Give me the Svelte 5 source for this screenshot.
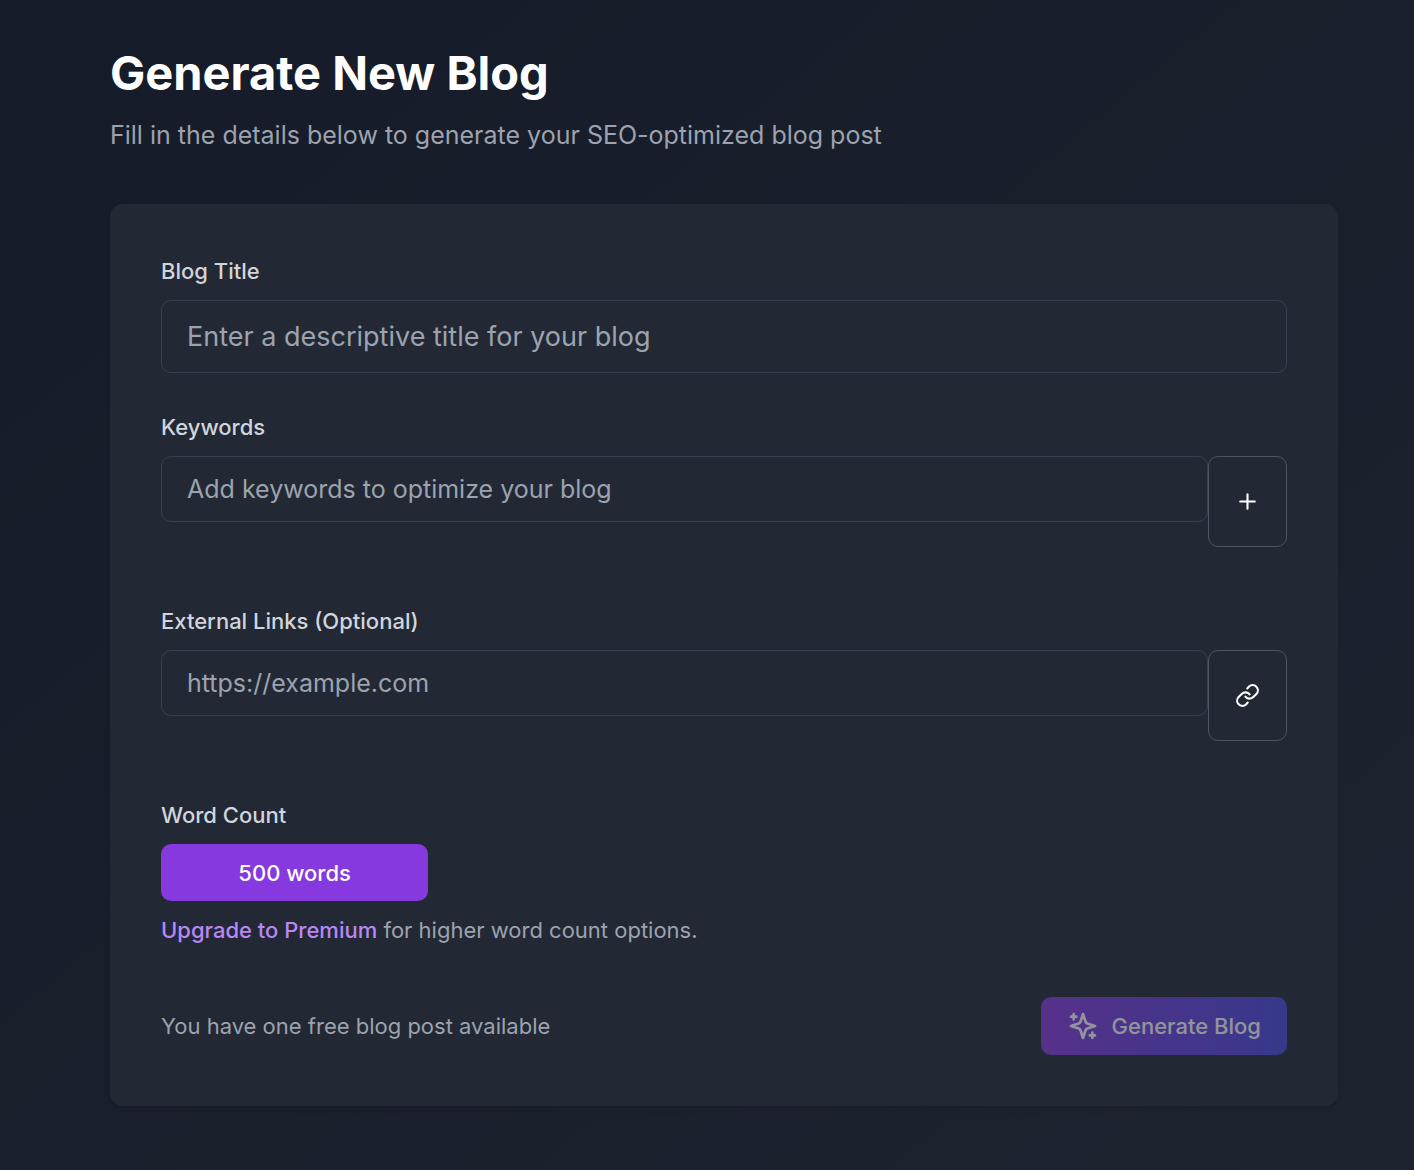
<script>
  let title = $state('')
  let keyword = $state('')
  let keywords = $state([])
  let link = $state('')
  let links = $state([])
  let wordCount = $state(500)

  const wordCountOptions = [500]

  let canGenerate = $derived(title.trim() !== '' && keywords.length > 0)

  function addKeyword() {
    const value = keyword.trim()
    if (!value || keywords.includes(value)) return
    keywords.push(value)
    keyword = ''
  }

  function addLink() {
    const value = link.trim()
    if (!value || links.includes(value)) return
    links.push(value)
    link = ''
  }
</script>

<main>
  <div class="container">
    <header>
      <h1>Generate New Blog</h1>
      <p>Fill in the details below to generate your SEO-optimized blog post</p>
    </header>

    <form class="card" onsubmit={(e) => e.preventDefault()}>
      <div class="field">
        <label for="title">Blog Title</label>
        <input id="title" class="title-input" bind:value={title} placeholder="Enter a descriptive title for your blog" />
      </div>

      <div class="field list-field">
        <label for="keyword">Keywords</label>
        <div class="row">
          <input id="keyword" bind:value={keyword} placeholder="Add keywords to optimize your blog" />
          <button type="button" class="add" aria-label="Add keyword" onclick={addKeyword}>
            <svg viewBox="0 0 24 24"><path d="M5 12h14M12 5v14" /></svg>
          </button>
        </div>
        {#if keywords.length}
          <ul>
            {#each keywords as item}
              <li>{item}</li>
            {/each}
          </ul>
        {/if}
      </div>

      <div class="field list-field">
        <label for="link">External Links (Optional)</label>
        <div class="row">
          <input id="link" type="url" bind:value={link} placeholder="https://example.com" />
          <button type="button" class="add" aria-label="Add link" onclick={addLink}>
            <svg viewBox="0 0 24 24">
              <path d="M10 13a5 5 0 0 0 7.54.54l3-3a5 5 0 0 0-7.07-7.07l-1.72 1.71" />
              <path d="M14 11a5 5 0 0 0-7.54-.54l-3 3a5 5 0 0 0 7.07 7.07l1.71-1.71" />
            </svg>
          </button>
        </div>
        {#if links.length}
          <ul>
            {#each links as item}
              <li>{item}</li>
            {/each}
          </ul>
        {/if}
      </div>

      <div class="field" role="group" aria-labelledby="word-count">
        <span id="word-count" class="label">Word Count</span>
        <div class="counts">
          {#each wordCountOptions as count}
            <button type="button" class="count" class:active={wordCount === count} onclick={() => (wordCount = count)}>
              {count} words
            </button>
          {/each}
        </div>
        <p class="hint"><a href="/pricing">Upgrade to Premium</a> for higher word count options.</p>
      </div>

      <div class="footer">
        <p>You have one free blog post available</p>
        <button type="submit" class="generate" disabled={!canGenerate}>
          <svg viewBox="0 0 24 24">
            <path d="m12 3-1.91 5.81a2 2 0 0 1-1.28 1.28L3 12l5.81 1.91a2 2 0 0 1 1.28 1.28L12 21l1.91-5.81a2 2 0 0 1 1.28-1.28L21 12l-5.81-1.91a2 2 0 0 1-1.28-1.28L12 3Z" />
            <path d="M5 3v4M19 17v4M3 5h4M17 19h4" />
          </svg>
          Generate Blog
        </button>
      </div>
    </form>
  </div>
</main>

<style>
  :global(body) {
    margin: 0;
    background: #111827;
  }
  main {
    box-sizing: border-box;
    min-height: 100vh;
    padding: 46px 76px 64px 110px;
    background: linear-gradient(to bottom right, #151b28, #1d2430);
    color: #9ca3af;
    font-family: Inter, sans-serif;
    font-size: 22px;
    line-height: 32px;
  }
  h1,
  p {
    margin: 0;
  }
  h1 {
    color: #fff;
    font-size: 47px;
    font-weight: 700;
    line-height: 54px;
  }
  header {
    margin-bottom: 50px;
  }
  header p {
    margin-top: 16px;
    font-size: 25px;
    line-height: 38px;
  }
  .card {
    padding: 51px;
    border-radius: 13px;
    background: #222935;
    box-shadow: 0 2px 6px rgba(0, 0, 0, 0.15);
  }
  .field {
    margin-bottom: 38px;
  }
  .list-field {
    margin-bottom: 58px;
  }
  label,
  .label {
    display: block;
    margin-bottom: 13px;
    color: #d1d5db;
    font-weight: 500;
  }
  input {
    box-sizing: border-box;
    width: 100%;
    height: 66px;
    padding: 0 25px;
    border: 1px solid #374151;
    border-radius: 10px;
    outline: none;
    background: transparent;
    color: #fff;
    font: inherit;
    font-size: 25px;
  }
  input::placeholder {
    color: #9ca3af;
    opacity: 1;
  }
  input:focus {
    border-color: #9333ea;
  }
  .title-input {
    display: block;
    height: 73px;
    font-size: 27px;
  }
  .row {
    display: flex;
    align-items: flex-start;
  }
  button {
    border: none;
    border-radius: 10px;
    color: #fff;
    font: inherit;
    font-weight: 500;
    cursor: pointer;
  }
  svg {
    fill: none;
    stroke: currentColor;
    stroke-width: 2;
    stroke-linecap: round;
    stroke-linejoin: round;
  }
  .add {
    display: flex;
    flex: none;
    align-items: center;
    justify-content: center;
    width: 79px;
    height: 91px;
    padding: 0;
    border: 1px solid #4b5563;
    background: transparent;
  }
  .add svg {
    width: 25px;
    height: 25px;
  }
  ul {
    display: flex;
    flex-wrap: wrap;
    gap: 12px;
    margin: 12px 0 0;
    padding: 0;
    list-style: none;
  }
  li {
    padding: 4px 16px;
    border-radius: 10px;
    background: #374151;
    color: #d1d5db;
  }
  .counts {
    display: grid;
    grid-template-columns: repeat(4, 1fr);
    gap: 19px;
  }
  .count {
    height: 57px;
    background: #374151;
  }
  .count.active {
    background: #8639df;
  }
  .hint {
    margin-top: 13px;
  }
  a {
    color: #b987f5;
    font-weight: 500;
    text-decoration: none;
  }
  .footer {
    display: flex;
    align-items: center;
    justify-content: space-between;
    margin-top: 51px;
  }
  .generate {
    display: flex;
    align-items: center;
    gap: 13px;
    height: 58px;
    padding: 0 26px;
    background: linear-gradient(to right, #8b39e0, #4c48de);
  }
  .generate:disabled {
    opacity: 0.5;
    cursor: not-allowed;
  }
  .generate svg {
    width: 32px;
    height: 32px;
  }
</style>
